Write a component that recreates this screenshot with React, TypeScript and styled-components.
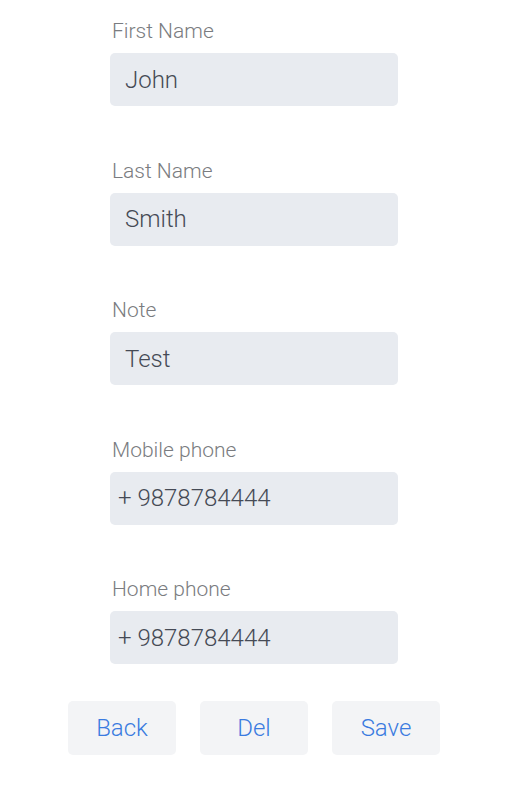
import React from "react";
import styled, { createGlobalStyle } from "styled-components";

const Global = createGlobalStyle`
  html, body { margin: 0; padding: 0; background: #ffffff; }
  body { font-family: Roboto, "Liberation Sans", sans-serif; font-weight: 300; }
`;

const Page = styled.div`
  width: 508px;
  display: flex;
  flex-direction: column;
  align-items: center;
  padding-top: 19px;
`;

const Form = styled.div`
  width: 288px;
  display: flex;
  flex-direction: column;
  gap: 52.5px;
`;

const Field = styled.label`
  display: flex;
  flex-direction: column;
  gap: 10px;
`;

const Label = styled.span`
  font-size: 21px;
  line-height: 24px;
  color: #7a7c80;
  padding-left: 2px;
`;

const Input = styled.input<{ $pad?: number }>`
  box-sizing: border-box;
  width: 288px;
  height: 53px;
  border: none;
  border-radius: 5px;
  background: #e8ebf0;
  padding: 0 0 0 ${(p) => p.$pad ?? 15}px;
  font-family: Roboto, "Liberation Sans", sans-serif;
  font-weight: 300;
  font-size: 24px;
  color: #454a55;
  outline: none;
`;

const Buttons = styled.div`
  display: flex;
  gap: 24px;
  margin-top: 37px;
`;

const Button = styled.button`
  width: 108px;
  height: 54px;
  border: none;
  border-radius: 5px;
  background: #f3f4f6;
  color: #3a7be0;
  font-family: Roboto, "Liberation Sans", sans-serif;
  font-weight: 300;
  font-size: 24px;
  cursor: pointer;
`;

const fields = [
  { label: "First Name", value: "John" },
  { label: "Last Name", value: "Smith" },
  { label: "Note", value: "Test" },
  { label: "Mobile phone", value: "+ 9878784444", pad: 8 },
  { label: "Home phone", value: "+ 9878784444", pad: 8 },
];

export default function App() {
  return (
    <>
      <Global />
      <Page>
        <Form>
          {fields.map((f) => (
            <Field key={f.label}>
              <Label>{f.label}</Label>
              <Input $pad={f.pad} defaultValue={f.value} />
            </Field>
          ))}
        </Form>
        <Buttons>
          <Button>Back</Button>
          <Button>Del</Button>
          <Button>Save</Button>
        </Buttons>
      </Page>
    </>
  );
}
